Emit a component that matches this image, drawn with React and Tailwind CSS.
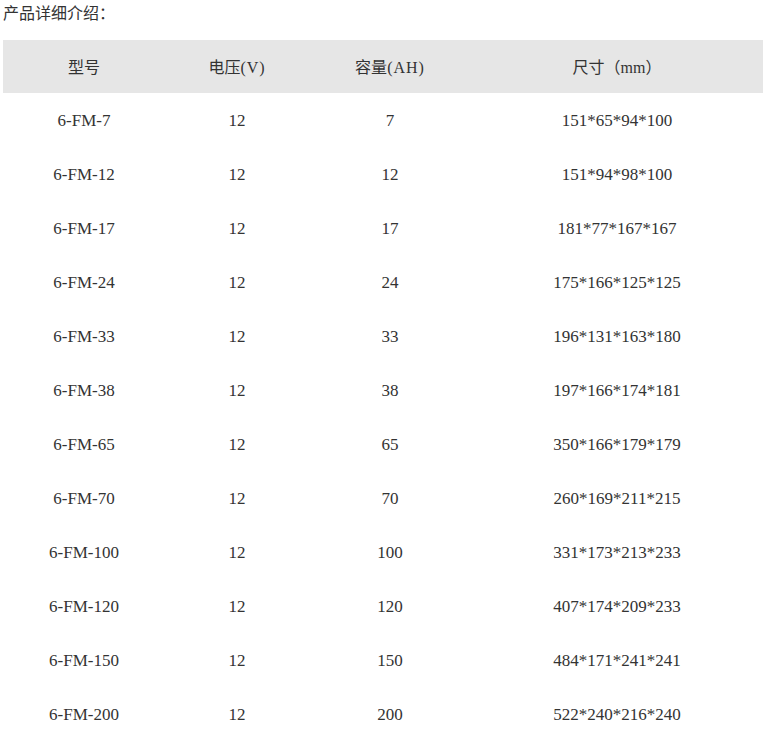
import React from "react";

const rows = [
  ["6-FM-7", "12", "7", "151*65*94*100"],
  ["6-FM-12", "12", "12", "151*94*98*100"],
  ["6-FM-17", "12", "17", "181*77*167*167"],
  ["6-FM-24", "12", "24", "175*166*125*125"],
  ["6-FM-33", "12", "33", "196*131*163*180"],
  ["6-FM-38", "12", "38", "197*166*174*181"],
  ["6-FM-65", "12", "65", "350*166*179*179"],
  ["6-FM-70", "12", "70", "260*169*211*215"],
  ["6-FM-100", "12", "100", "331*173*213*233"],
  ["6-FM-120", "12", "120", "407*174*209*233"],
  ["6-FM-150", "12", "150", "484*171*241*241"],
  ["6-FM-200", "12", "200", "522*240*216*240"],
];

const cjk = "font-['Noto_Sans_CJK_SC',sans-serif] text-[16px]";
const lat = "font-['Liberation_Serif','Noto_Sans_CJK_SC',serif]";

export default function App() {
  return (
    <div className="bg-white text-[#333] w-[775px] min-h-[740px]">
      <div className={`h-[40px] pl-[3px] leading-6 ${cjk}`}>产品详细介绍：</div>
      <table className="ml-[3px] w-[760px] border-collapse table-fixed">
        <colgroup>
          <col className="w-[162px]" />
          <col className="w-[144px]" />
          <col className="w-[162px]" />
          <col className="w-[292px]" />
        </colgroup>
        <thead>
          <tr className="bg-[#e6e6e6] h-[53px]">
            <th className="font-normal p-0 text-center">
              <span className={cjk}>型号</span>
            </th>
            <th className="font-normal p-0 text-center">
              <span className={cjk}>电压</span>
              <span className={`${lat} text-[16px] tracking-[1px]`}>(V)</span>
            </th>
            <th className="font-normal p-0 text-center">
              <span className={cjk}>容量</span>
              <span className={`${lat} text-[16px] tracking-[1px]`}>(AH)</span>
            </th>
            <th className="font-normal p-0 text-center">
              <span className={cjk}>尺寸（</span>
              <span className={`${lat} text-[16px]`}>mm</span>
              <span className={cjk}>）</span>
            </th>
          </tr>
        </thead>
        <tbody>
          {rows.map((r, i) => (
            <tr key={i} className="h-[54px]">
              {r.map((c, j) => (
                <td key={j} className={`p-0 pt-[2px] text-center text-[17px] ${lat}`}>
                  {c}
                </td>
              ))}
            </tr>
          ))}
        </tbody>
      </table>
    </div>
  );
}
